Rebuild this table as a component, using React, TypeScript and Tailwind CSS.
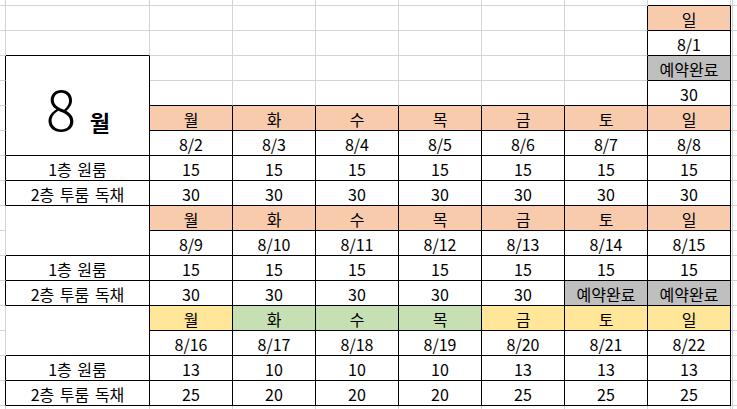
type Cell = {
  text?: string;
  bg?: string;
  black?: boolean;
  span?: number;
  big?: boolean;
  covered?: boolean;
};

const ORANGE = "bg-[#f8cbad]";
const YELLOW = "bg-[#ffe699]";
const GREEN = "bg-[#c6e0b4]";
const GRAY = "bg-[#bfbfbf]";

const days = ["월", "화", "수", "목", "금", "토", "일"];

const weeks = [
  {
    dates: ["8/2", "8/3", "8/4", "8/5", "8/6", "8/7", "8/8"],
    one: ["15", "15", "15", "15", "15", "15", "15"],
    two: ["30", "30", "30", "30", "30", "30", "30"],
    colors: [ORANGE, ORANGE, ORANGE, ORANGE, ORANGE, ORANGE, ORANGE],
  },
  {
    dates: ["8/9", "8/10", "8/11", "8/12", "8/13", "8/14", "8/15"],
    one: ["15", "15", "15", "15", "15", "15", "15"],
    two: ["30", "30", "30", "30", "30", "예약완료", "예약완료"],
    colors: [ORANGE, ORANGE, ORANGE, ORANGE, ORANGE, ORANGE, ORANGE],
  },
  {
    dates: ["8/16", "8/17", "8/18", "8/19", "8/20", "8/21", "8/22"],
    one: ["13", "10", "10", "10", "13", "13", "13"],
    two: ["25", "20", "20", "20", "25", "25", "25"],
    colors: [YELLOW, GREEN, GREEN, GREEN, YELLOW, YELLOW, YELLOW],
  },
];

// 18 rows x 11 columns: pre row/col, 16 sheet rows, spare strip
const COLS = 11;
function buildGrid(): Cell[][] {
  const rows: Cell[][] = [];
  const blank = () => Array.from({ length: COLS }, () => ({} as Cell));
  rows.push(blank()); // top sliver

  const r = () => {
    const row = blank();
    rows.push(row);
    return row;
  };

  let row = r();
  row[8] = { text: "일", bg: ORANGE, black: true };
  row = r();
  row[8] = { text: "8/1", black: true };
  row = r();
  row[1] = { black: true, span: 4, big: true };
  row[8] = { text: "예약완료", bg: GRAY, black: true };
  row = r();
  row[1] = { covered: true, black: true };
  row[8] = { text: "30", black: true };

  weeks.forEach((w, wi) => {
    const head = r();
    const date = r();
    if (wi === 0) {
      head[1] = { covered: true, black: true };
      date[1] = { covered: true, black: true };
    } else {
      head[1] = { span: 2 };
      date[1] = { covered: true };
    }
    const one = r();
    const two = r();
    one[1] = { text: "1층 원룸", black: true };
    two[1] = { text: "2층 투룸 독채", black: true };
    for (let i = 0; i < 7; i++) {
      head[i + 2] = { text: days[i], bg: w.colors[i], black: true };
      date[i + 2] = { text: w.dates[i], black: true };
      one[i + 2] = { text: w.one[i], black: true };
      two[i + 2] = {
        text: w.two[i],
        black: true,
        bg: w.two[i] === "예약완료" ? GRAY : undefined,
      };
    }
  });

  rows.push(blank()); // bottom strip
  return rows;
}

const grid = buildGrid();

function isBlack(ri: number, ci: number) {
  return !!grid[ri]?.[ci]?.black;
}

export default function App() {
  return (
    <div
      className="w-[737px] h-[409px] overflow-hidden bg-white text-black grid grid-cols-[6px_144px_repeat(7,83px)_2px_1fr] grid-rows-[6px_repeat(16,25px)_1fr] text-[16px] leading-none"
      style={{ fontFamily: '"Noto Sans CJK KR", "Noto Sans", sans-serif' }}
    >
      {grid.map((row, ri) =>
        row.map((cell, ci) => {
          if (cell.covered) return null;
          const lastRow = ri + (cell.span ?? 1) - 1;
          const rightBlack =
            cell.black || isBlack(ri, ci + 1) || (cell.span ? isBlack(lastRow, ci + 1) : false);
          const bottomBlack = isBlack(lastRow, ci) || isBlack(lastRow + 1, ci);
          const spanCls = cell.span === 4 ? "row-span-4" : cell.span === 2 ? "row-span-2" : "";
          return (
            <div
              key={`${ri}-${ci}`}
              className={`${spanCls} ${cell.bg ?? "bg-white"} border-r border-b ${
                rightBlack && ci < 10 ? "border-r-black" : "border-r-[#d4d4d4]"
              } ${bottomBlack ? "border-b-black" : "border-b-[#d4d4d4]"} ${
                ci === 10 ? "border-r-0" : ""
              } ${ri === grid.length - 1 ? "border-b-0" : ""} flex items-center justify-center whitespace-nowrap`}
            >
              {cell.big ? (
                <div className="flex items-baseline gap-[14px] pt-[3px] pl-px">
                  <span className="text-[56px] font-light leading-none">8</span>
                  <span className="text-[22px] font-bold leading-none">월</span>
                </div>
              ) : (
                <span className="pt-[2px] [word-spacing:2px]">{cell.text}</span>
              )}
            </div>
          );
        })
      )}
    </div>
  );
}
